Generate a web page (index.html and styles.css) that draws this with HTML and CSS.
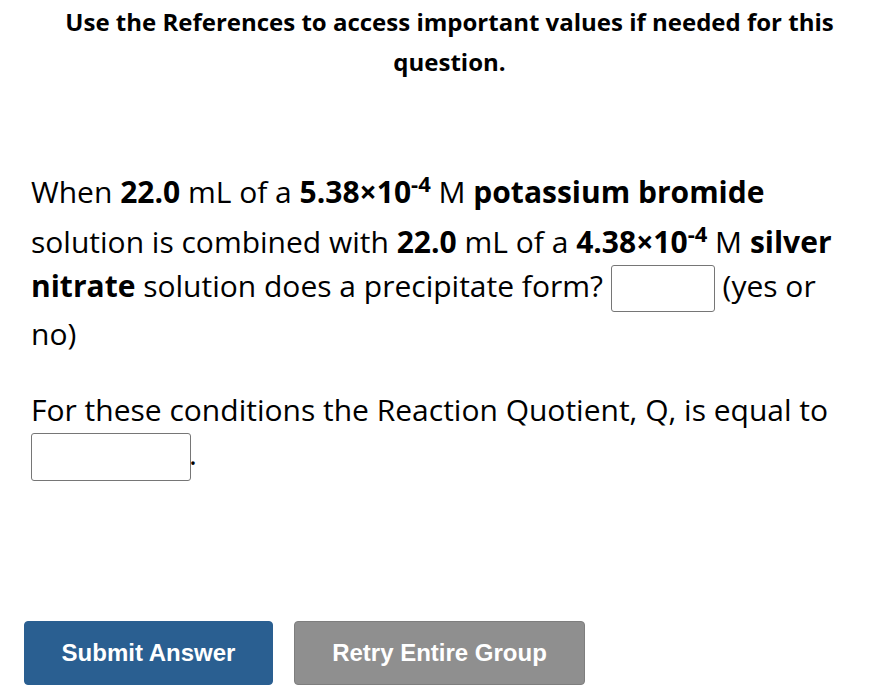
FILE: index.html
```html
<!DOCTYPE html>
<html>
<head>
<meta charset="utf-8">
<link rel="stylesheet" href="styles.css">
</head>
<body>
<div class="page">
  <p class="intro">Use the References to access important values if needed for this question.</p>
  <p class="q q1">When <b>22.0</b> mL of a <b>5.38×10<sup>-4</sup></b> M <b>potassium bromide</b> solution is combined with <b>22.0</b> mL of a <b>4.38×10<sup>-4</sup></b> M <b>silver nitrate</b> solution does a precipitate form? <span class="box box-s"></span> (yes or no)</p>
  <p class="q q2">For these conditions the Reaction Quotient, Q, is equal to <span class="box box-l"></span>.</p>
  <div class="actions">
    <button class="btn btn-primary">Submit Answer</button>
    <button class="btn btn-grey">Retry Entire Group</button>
  </div>
</div>
</body>
</html>
```
FILE: styles.css
```css
html, body {
  margin: 0;
  padding: 0;
  background: #fff;
}
.page {
  font-family: "Open Sans", "DejaVu Sans", sans-serif;
  color: #000;
  padding: 2px 30px 0 31px;
}
.intro {
  margin: 0;
  padding: 0 20px 0 32px;
  text-align: center;
  font-weight: 700;
  font-size: 24px;
  line-height: 40px;
}
.q {
  font-size: 30px;
  line-height: 44px;
  margin: 0;
}
.q1 {
  margin-top: 82px;
}
.q2 {
  margin-top: 32px;
}
sup {
  font-size: 22px;
  line-height: 38px;
  vertical-align: 11px;
}
.box {
  display: inline-block;
  vertical-align: middle;
  border: 1px solid #767676;
  border-radius: 3px;
  box-sizing: border-box;
  background: #fff;
}
.box-s {
  width: 104px;
  height: 47px;
}
.box-l {
  width: 160px;
  height: 48px;
  margin-right: -2px;
}
.actions {
  display: flex;
  gap: 21px;
  margin-top: 140px;
  margin-left: -7px;
}
.btn {
  font-family: "Liberation Sans", Arial, sans-serif;
  font-weight: 700;
  font-size: 24px;
  color: #fff;
  height: 64px;
  border-radius: 4px;
  border: 1px solid transparent;
  padding: 0;
}
.btn-primary {
  background: #2a5f91;
  border-color: #2a5f91;
  width: 249px;
}
.btn-grey {
  background: #8f8f8f;
  border-color: #7e7e7e;
  width: 291px;
}
```
